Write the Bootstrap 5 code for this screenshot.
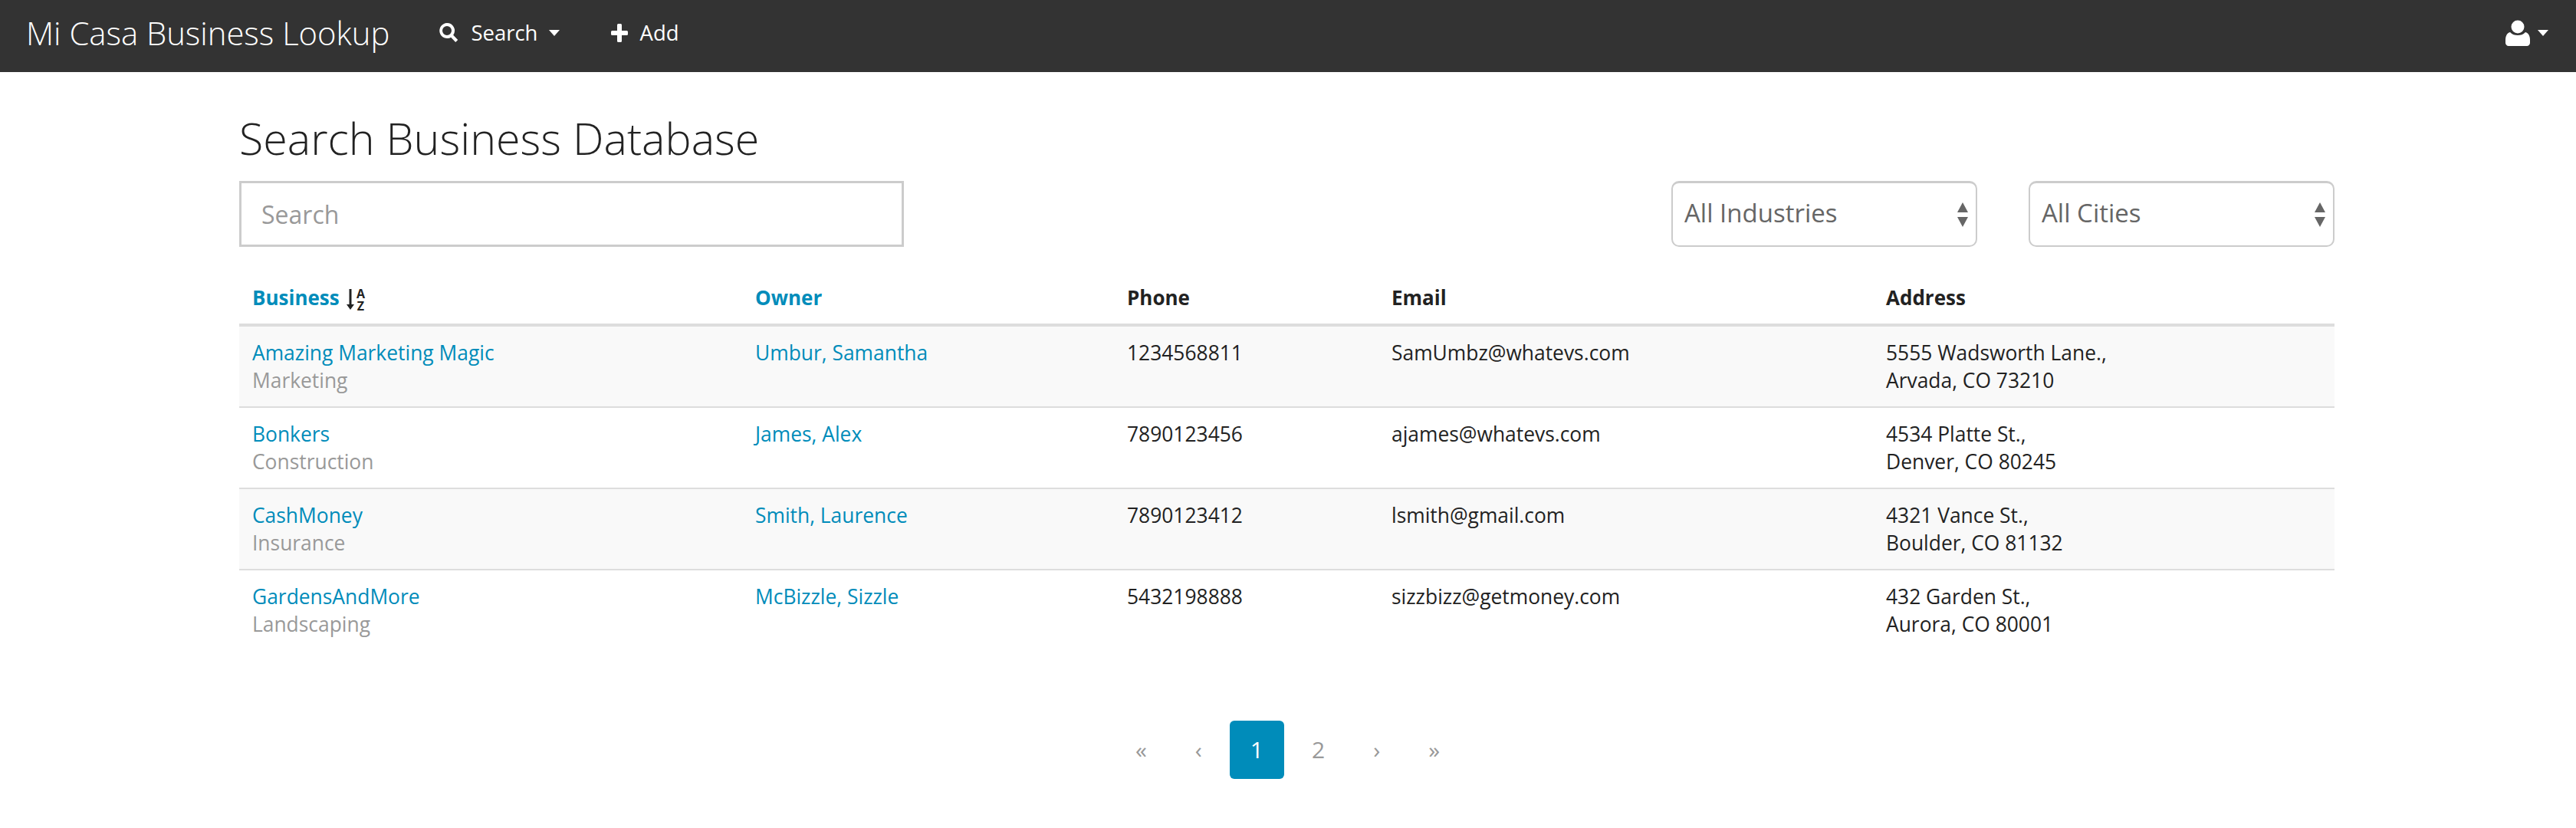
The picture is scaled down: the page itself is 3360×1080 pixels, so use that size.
<!DOCTYPE html>
<html lang="en">
<head>
  <meta charset="UTF-8" />
  <title>Mi Casa Business Lookup</title>
  <link href="https://cdn.jsdelivr.net/npm/bootstrap@5.3.0/dist/css/bootstrap.min.css" rel="stylesheet" />
  <style>
    body { font-family: "Open Sans", sans-serif; font-size: 26.4px; line-height: 36px; color: #222; }
    a { color: #008cba; text-decoration: none; }

    .topbar { background: #333; height: 94px; padding: 0 28px 8px 34px; }
    .topbar .navbar-brand { font-size: 41.8px; font-weight: 300; color: #fff; padding: 0; margin: 0 56px 0 0; line-height: 60px; }
    .topbar .nav-link { color: #fff; font-size: 27.5px; line-height: 60px; padding: 0; display: flex; align-items: center; }
    .topbar .dropdown-toggle::after { border-top: 8px solid; border-left: 7px solid transparent; border-right: 7px solid transparent; border-bottom: 0; margin-left: 14px; vertical-align: middle; }
    .topbar .acct-menu .dropdown-toggle::after { margin-left: 10px; }
    .nav-gap { gap: 51px; }
    .bar-icon { fill: #fff; margin-right: 16px; }

    .page-wrap { width: 2733px; margin: 0 0 0 312px; }
    .page-title { font-size: 57.4px; font-weight: 300; line-height: 80px; margin: 0; padding: 46px 0 16px; color: #222; }

    .filter-row { height: 86px; margin-bottom: 32px; }
    .search-box { width: 867px; height: 86px; border: 3px solid #ccc; border-radius: 0; padding: 0 26px; font-size: 32px; }
    .search-box::placeholder { color: #999; }
    .pick-box { width: 399px; height: 86px; border: 2px solid #ccc; border-top-width: 3px; border-radius: 10px; padding: 0 40px 4px 15px; font-size: 33px; color: #666;
      background-position: right 8px center; background-size: 18px 32px;
      background-image: url("data:image/svg+xml,%3Csvg xmlns='http://www.w3.org/2000/svg' viewBox='0 0 18 32'%3E%3Cpath fill='%23666' d='M9 0l7 13H2zM9 32L2 19h14z'/%3E%3C/svg%3E"); }
    .pick-gap { gap: 67px; }

    .biz-table { table-layout: fixed; margin: 0; --bs-table-striped-bg: #f9f9f9; --bs-table-color: #222; --bs-table-striped-color: #222; }
    .biz-table th, .biz-table td { padding: 16px 17px; border-bottom: 2px solid #ddd; line-height: 36px; }
    .biz-table th { font-size: 26px; font-weight: 700; border-bottom: 4px solid #ddd; vertical-align: middle; }
    .biz-table tbody { border-top: 0 !important; }
    .biz-table tbody tr:last-child td { border-bottom: 0; }
    .biz-sub { color: #999; }
    .sort-icon { margin: -10px 0 -10px 3px; vertical-align: middle; overflow: visible; }

    .pager-row { margin-top: 92px; margin-left: 2px; gap: 10px; }
    .pager-row .page-link { border: 0; background: transparent; color: #999; font-size: 30px; line-height: 76px; height: 76px; padding: 0 27px; border-radius: 6px !important; }
    .pager-row .page-item.active .page-link { background: #008cba; color: #fff; }
  </style>
</head>
<body>
  <nav class="navbar navbar-expand topbar">
    <a class="navbar-brand" href="#">Mi Casa Business Lookup</a>
    <ul class="navbar-nav nav-gap me-auto">
      <li class="nav-item dropdown">
        <a class="nav-link dropdown-toggle" href="#" data-bs-toggle="dropdown">
          <svg class="bar-icon" width="26" height="28" viewBox="0 0 26 28"><path d="M11 1a10 10 0 0 1 8.200 15.700l6 6.300-3 3-6-6.300A10 10 0 1 1 11 1zm0 4a6 6 0 1 0 0 12 6 6 0 0 0 0-12z"/></svg>
          Search
        </a>
      </li>
      <li class="nav-item">
        <a class="nav-link" href="#">
          <svg class="bar-icon" width="22" height="24" viewBox="0 0 22 24"><path d="M8 1.500a1.500 1.500 0 0 1 1.500-1.500h3A1.500 1.500 0 0 1 14 1.500V9h6.500A1.500 1.500 0 0 1 22 10.500v3a1.500 1.500 0 0 1-1.500 1.500H14v7.500a1.500 1.500 0 0 1-1.500 1.500h-3A1.500 1.500 0 0 1 8 22.500V15H1.500A1.500 1.500 0 0 1 0 13.500v-3A1.500 1.500 0 0 1 1.500 9H8z"/></svg>
          Add
        </a>
      </li>
    </ul>
    <ul class="navbar-nav acct-menu">
      <li class="nav-item dropdown">
        <a class="nav-link dropdown-toggle" href="#" data-bs-toggle="dropdown">
          <svg width="32" height="34" viewBox="0 0 32 34" fill="#fff"><circle cx="16" cy="9" r="8.500"/><path d="M6 16c3 3 6 4 10 4s7-1 10-4c4 1 6 5 6 10v4c0 2-2 4-4 4H4c-2 0-4-2-4-4v-4c0-5 2-9 6-10z"/></svg>
        </a>
      </li>
    </ul>
  </nav>

  <main class="page-wrap">
    <h1 class="page-title">Search Business Database</h1>

    <div class="d-flex justify-content-between filter-row">
      <input type="text" class="form-control search-box" placeholder="Search">
      <div class="d-flex pick-gap">
        <select class="form-select pick-box"><option>All Industries</option></select>
        <select class="form-select pick-box"><option>All Cities</option></select>
      </div>
    </div>

    <table class="table table-striped biz-table">
      <colgroup>
        <col style="width: 656px"><col style="width: 485px"><col style="width: 345px"><col style="width: 645px"><col>
      </colgroup>
      <thead>
        <tr>
          <th><a href="#">Business</a>
            <svg class="sort-icon" width="24" height="28" viewBox="0 0 24 28">
              <path fill="#222" d="M3.500 0h3v20h3.500L5 27 0 20h3.500z"/>
              <text x="18.500" y="12" font-size="16" font-weight="700" font-family="Open Sans" text-anchor="middle" fill="#222">A</text>
              <text x="18.500" y="28" font-size="16" font-weight="700" font-family="Open Sans" text-anchor="middle" fill="#222">Z</text>
            </svg>
          </th>
          <th><a href="#">Owner</a></th>
          <th>Phone</th>
          <th>Email</th>
          <th>Address</th>
        </tr>
      </thead>
      <tbody>
        <tr>
          <td><a href="#">Amazing Marketing Magic</a><div class="biz-sub">Marketing</div></td>
          <td><a href="#">Umbur, Samantha</a></td>
          <td>1234568811</td>
          <td>SamUmbz@whatevs.com</td>
          <td>5555 Wadsworth Lane.,<br>Arvada, CO 73210</td>
        </tr>
        <tr>
          <td><a href="#">Bonkers</a><div class="biz-sub">Construction</div></td>
          <td><a href="#">James, Alex</a></td>
          <td>7890123456</td>
          <td>ajames@whatevs.com</td>
          <td>4534 Platte St.,<br>Denver, CO 80245</td>
        </tr>
        <tr>
          <td><a href="#">CashMoney</a><div class="biz-sub">Insurance</div></td>
          <td><a href="#">Smith, Laurence</a></td>
          <td>7890123412</td>
          <td>lsmith@gmail.com</td>
          <td>4321 Vance St.,<br>Boulder, CO 81132</td>
        </tr>
        <tr>
          <td><a href="#">GardensAndMore</a><div class="biz-sub">Landscaping</div></td>
          <td><a href="#">McBizzle, Sizzle</a></td>
          <td>5432198888</td>
          <td>sizzbizz@getmoney.com</td>
          <td>432 Garden St.,<br>Aurora, CO 80001</td>
        </tr>
      </tbody>
    </table>

    <ul class="pagination justify-content-center pager-row">
      <li class="page-item"><a class="page-link" href="#">«</a></li>
      <li class="page-item"><a class="page-link" href="#">‹</a></li>
      <li class="page-item active"><a class="page-link" href="#">1</a></li>
      <li class="page-item"><a class="page-link" href="#">2</a></li>
      <li class="page-item"><a class="page-link" href="#">›</a></li>
      <li class="page-item"><a class="page-link" href="#">»</a></li>
    </ul>
  </main>

  <script src="https://cdn.jsdelivr.net/npm/bootstrap@5.3.0/dist/js/bootstrap.bundle.min.js"></script>
</body>
</html>
